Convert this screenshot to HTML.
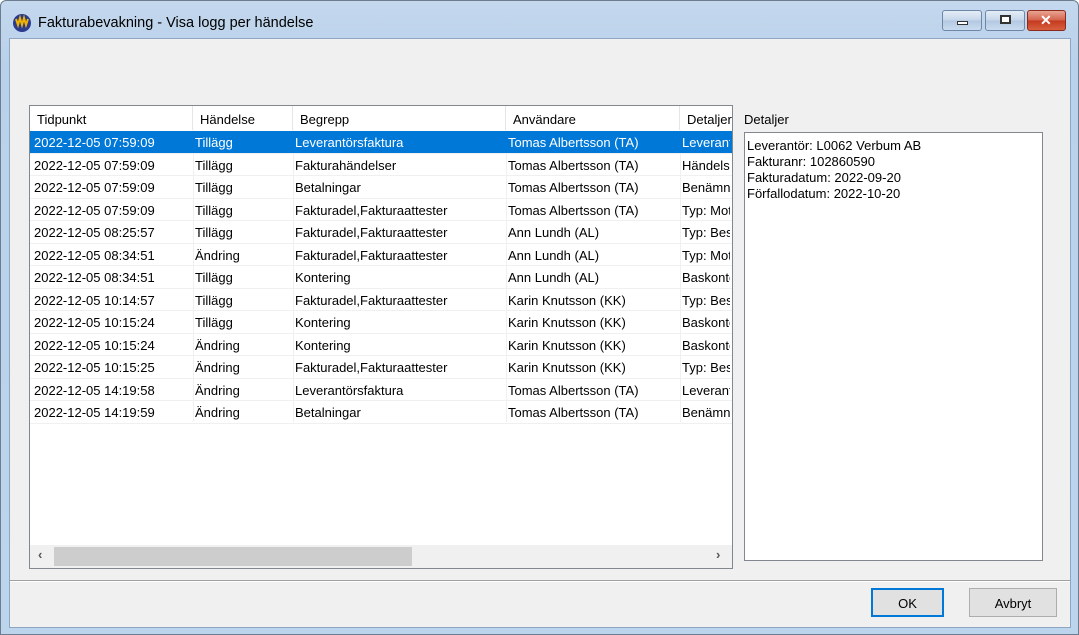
<!DOCTYPE html>
<html><head><meta charset="utf-8"><style>
*{margin:0;padding:0;box-sizing:border-box}
body{width:1079px;height:635px;overflow:hidden;background:#fff;font-family:"Liberation Sans",sans-serif;font-size:13px;color:#000;position:relative}
.frame{position:absolute;left:0;top:0;width:1079px;height:635px;background:linear-gradient(#c4d8ee,#b9d1ea 60px,#bcd4ec);border:1px solid #6d7c8f;border-radius:6px 6px 0 0}
.client{position:absolute;left:9px;top:38px;width:1062px;height:590px;background:#f0f0f0;border:1px solid #8ea6c2}
.title{position:absolute;left:38px;top:15px;font-size:14.5px;color:#000}
.abs{position:absolute}
.btn{position:absolute;top:10px;height:21px;border:1px solid #6f87a6;border-radius:3px;background:linear-gradient(#e4edf7,#c5d6ea 50%,#b3c8e1 51%,#c9dbef)}
.list{position:absolute;left:29px;top:105px;width:704px;height:464px;background:#fff;border:1px solid #828790}
.hdr{position:absolute;top:0;height:24px;border-right:1px solid #e5e5e5;padding:6px 0 0 7px;white-space:nowrap;overflow:hidden}
.row{position:absolute;left:0;width:702px;height:22.5px;border-bottom:1px solid #f0f0f0}
.c{position:absolute;top:4px;white-space:nowrap;overflow:hidden}
.sel{background:#0078d7;color:#fff}
.vl{position:absolute;top:24px;width:1px;height:292px;background:#f0f0f0}
</style></head><body>
<div class="frame"></div>
<svg class="abs" style="left:12px;top:13px" width="20" height="20" viewBox="0 0 20 20"><circle cx="10" cy="10" r="9" fill="#2a3b8f"/><path d="M4 6 L6 12 L8 5 L10 12 L12 5 L14 12 L16 6" stroke="#f2b200" stroke-width="2" fill="none"/></svg>
<div class="title">Fakturabevakning - Visa logg per händelse</div>
<div class="btn" style="left:942px;width:40px"><div class="abs" style="left:14px;top:10px;width:11px;height:4px;background:#fff;border:1px solid #333"></div></div>
<div class="btn" style="left:985px;width:40px"><div class="abs" style="left:14px;top:4px;width:11px;height:9px;border:2px solid #333;background:#fff"></div></div>
<div class="btn" style="left:1027px;width:39px;border-color:#8b2a1c;background:linear-gradient(#e8a493,#d4614a 50%,#c4391f 51%,#d8603f)"><div class="abs" style="left:12px;top:1px;color:#fff;font-weight:bold;font-size:14px">✕</div></div>
<div class="client"></div>
<div class="list">
<div class="hdr" style="left:0;width:163px">Tidpunkt</div>
<div class="hdr" style="left:163px;width:100px">Händelse</div>
<div class="hdr" style="left:263px;width:213px">Begrepp</div>
<div class="hdr" style="left:476px;width:174px">Användare</div>
<div class="hdr" style="left:650px;width:52px;border:none">Detaljer</div>
<div class="vl" style="left:163px"></div><div class="vl" style="left:263px"></div><div class="vl" style="left:476px"></div><div class="vl" style="left:650px"></div>
<div id="rows"></div>
<div class="abs" style="left:0;top:439px;width:702px;height:23px;background:#f0f0f0"><div class="abs" style="left:24px;top:2px;width:358px;height:19px;background:#cdcdcd"></div><div class="abs" style="left:8px;top:2px;color:#555;font-weight:bold">‹</div><div class="abs" style="left:686px;top:2px;color:#555;font-weight:bold">›</div></div>
</div>
<div class="abs" style="left:744px;top:112px">Detaljer</div>
<div class="abs" style="left:744px;top:132px;width:299px;height:429px;background:#fff;border:1px solid #828790;padding:5px 0 0 2px;line-height:16px">Leverantör: L0062 Verbum AB<br>Fakturanr: 102860590<br>Fakturadatum: 2022-09-20<br>Förfallodatum: 2022-10-20</div>
<div class="abs" style="left:10px;top:580px;width:1060px;height:2px;border-top:1px solid #a0a0a0;border-bottom:1px solid #fff"></div>
<div class="abs" style="left:871px;top:588px;width:73px;height:29px;border:2px solid #0078d7;background:#e1e1e1;text-align:center;padding-top:6px">OK</div>
<div class="abs" style="left:969px;top:588px;width:88px;height:29px;border:1px solid #adadad;background:#e1e1e1;text-align:center;padding-top:7px">Avbryt</div>
<script>
var d=[["07:59:09","Tillägg","Leverantörsfaktura","Tomas Albertsson (TA)","Leverantör"],
["07:59:09","Tillägg","Fakturahändelser","Tomas Albertsson (TA)","Händelse"],
["07:59:09","Tillägg","Betalningar","Tomas Albertsson (TA)","Benämning"],
["07:59:09","Tillägg","Fakturadel,Fakturaattester","Tomas Albertsson (TA)","Typ: Mot"],
["08:25:57","Tillägg","Fakturadel,Fakturaattester","Ann Lundh (AL)","Typ: Bes"],
["08:34:51","Ändring","Fakturadel,Fakturaattester","Ann Lundh (AL)","Typ: Mot"],
["08:34:51","Tillägg","Kontering","Ann Lundh (AL)","Baskonto"],
["10:14:57","Tillägg","Fakturadel,Fakturaattester","Karin Knutsson (KK)","Typ: Bes"],
["10:15:24","Tillägg","Kontering","Karin Knutsson (KK)","Baskonto"],
["10:15:24","Ändring","Kontering","Karin Knutsson (KK)","Baskonto"],
["10:15:25","Ändring","Fakturadel,Fakturaattester","Karin Knutsson (KK)","Typ: Bes"],
["14:19:58","Ändring","Leverantörsfaktura","Tomas Albertsson (TA)","Leverantör"],
["14:19:59","Ändring","Betalningar","Tomas Albertsson (TA)","Benämning"]];
var h="",L=[4,165,265,478,652],W=[158,96,208,170,48];
d.forEach(function(r,i){var v=["2022-12-05 "+r[0],r[1],r[2],r[3],r[4]];
h+='<div class="row'+(i==0?' sel':'')+'" style="top:'+(25+i*22.5)+'px">';
v.forEach(function(t,j){h+='<div class="c" style="left:'+L[j]+'px;width:'+W[j]+'px">'+t+'</div>'});h+='</div>';});
document.getElementById("rows").innerHTML=h;
</script>
</body></html>
